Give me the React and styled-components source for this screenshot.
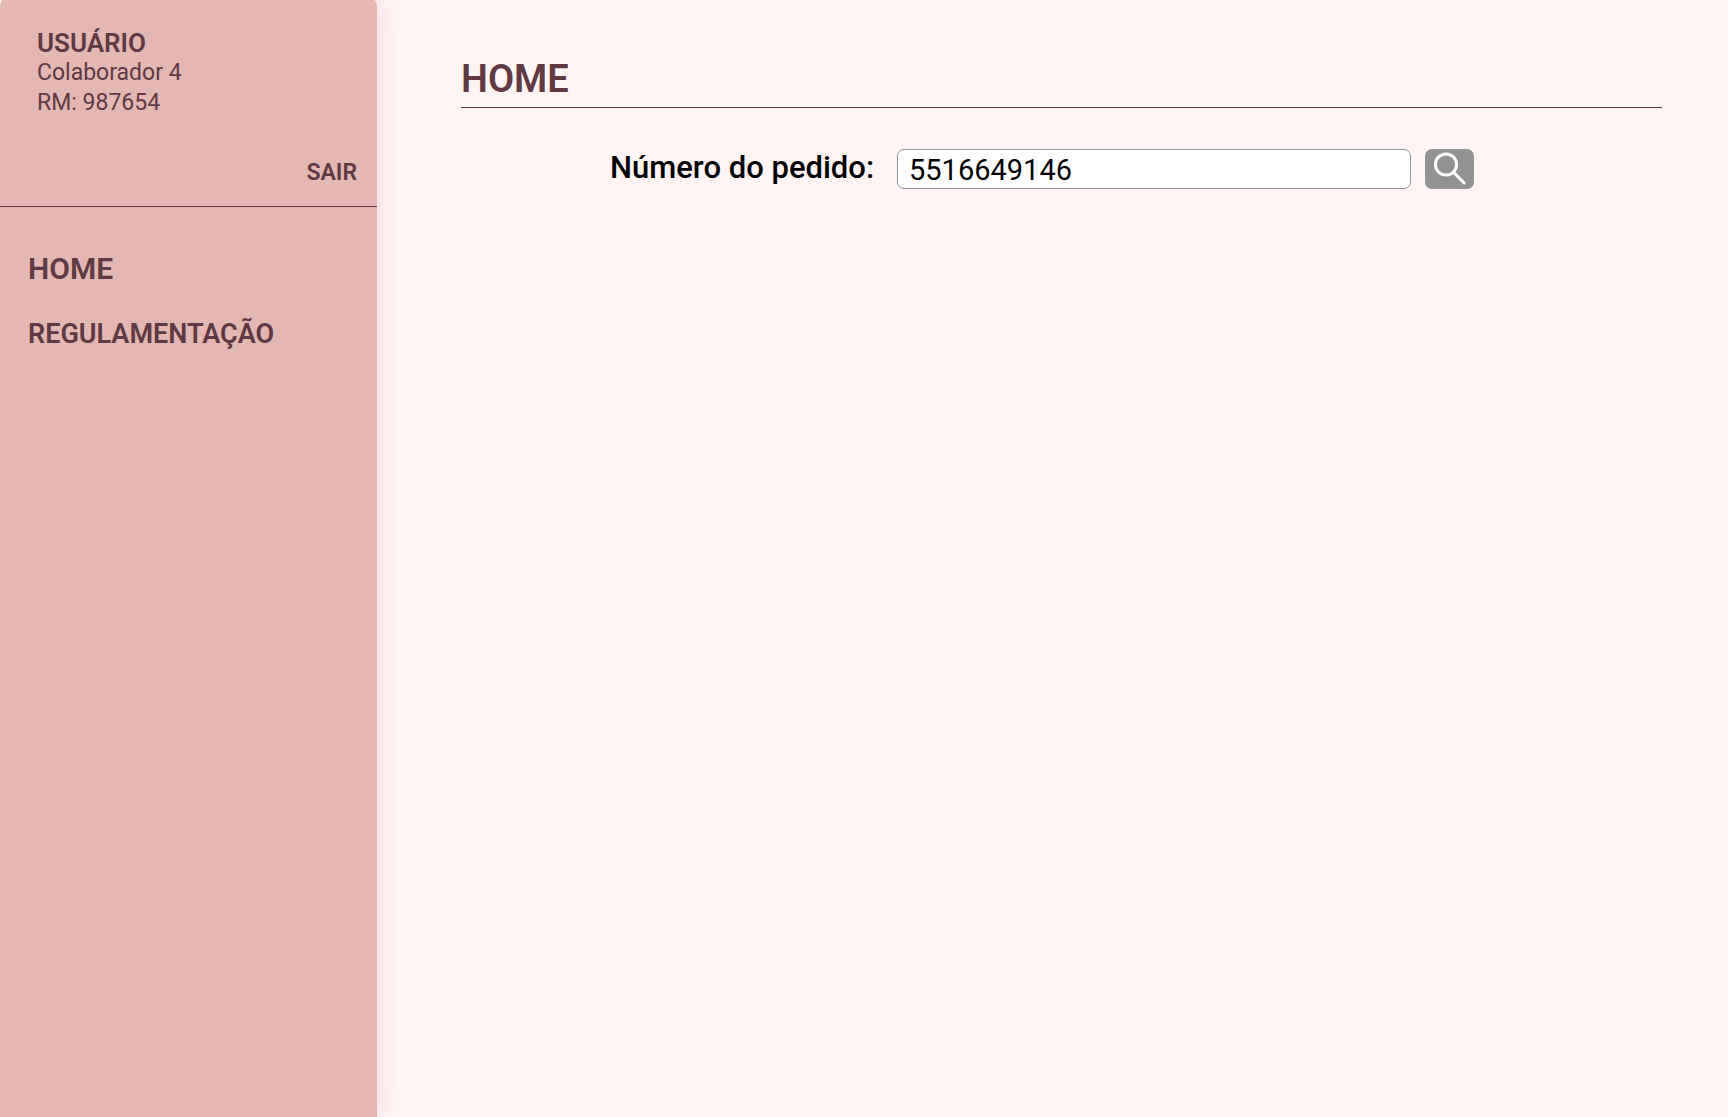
import React, { useState } from "react";
import styled, { createGlobalStyle } from "styled-components";

const wine = "#613943";
const blush = "#fff5f4";

const GlobalStyle = createGlobalStyle`
  *, *::before, *::after { box-sizing: border-box; }
  body {
    margin: 0;
    background: ${blush};
    color: ${wine};
    font-family: Roboto, "Noto Sans", "Liberation Sans", sans-serif;
  }
  h1, p { margin: 0; }
`;

const Page = styled.div`
  display: flex;
  min-height: 100vh;
`;

const Sidebar = styled.aside`
  flex: 0 0 377px;
  background: #e4b7b2;
  border-radius: 3px 3px 0 0 / 8px 8px 0 0;
  box-shadow: 4px 0 24px rgba(228, 160, 175, 0.26);
`;

const UserPanel = styled.section`
  display: flex;
  flex-direction: column;
  height: 207px;
  padding: 28px 20px 16px 37px;
  border-bottom: 1px solid ${wine};
`;

const UserName = styled.p`
  font-size: 26px;
  font-weight: 600;
  line-height: 30px;
`;

const UserDetail = styled.p`
  font-size: 23px;
  line-height: 30px;
`;

const LogoutButton = styled.button`
  align-self: flex-end;
  margin-top: auto;
  padding: 0;
  border: 0;
  background: none;
  color: inherit;
  font: 600 23px/34px Roboto, sans-serif;
  cursor: pointer;
`;

const Nav = styled.nav`
  display: flex;
  flex-direction: column;
  align-items: flex-start;
  gap: 29px;
  padding: 44px 28px;
`;

const NavLink = styled.a`
  color: inherit;
  font-size: ${({ $size }) => $size}px;
  font-weight: 600;
  line-height: 36px;
  text-decoration: none;
`;

const Main = styled.main`
  flex: 1;
  min-width: 0;
  padding: 57px 66px 40px 84px;
`;

const Title = styled.h1`
  padding: 0 0 6px;
  border-bottom: 1px solid ${wine};
  font-size: 38px;
  font-weight: 600;
  line-height: 44px;
`;

const SearchForm = styled.form`
  display: flex;
  align-items: center;
  gap: 14px;
  padding: 41px 188px 0 149px;
`;

const Label = styled.label`
  flex: 0 0 273px;
  padding-bottom: 3px;
  color: #000;
  font-size: 31px;
  font-weight: 500;
  line-height: 36px;
  white-space: nowrap;
`;

const OrderInput = styled.input`
  flex: 1;
  min-width: 0;
  height: 40px;
  padding: 2px 11px 0;
  border: 1px solid #929292;
  border-radius: 7px;
  background: #fff;
  color: #000;
  font: 400 29px/36px Roboto, sans-serif;
`;

const SearchButton = styled.button`
  flex: 0 0 49px;
  display: flex;
  height: 40px;
  padding: 0;
  border: 0;
  border-radius: 7px;
  background: #929292;
  cursor: pointer;
`;

function SearchIcon() {
  return (
    <svg width="49" height="40" viewBox="0 0 49 40" fill="none" stroke="#fff" strokeWidth="3" strokeLinecap="round" aria-hidden="true">
      <circle cx="21" cy="15.5" r="10.6" />
      <path d="M28.6 23.4 39.2 34" />
    </svg>
  );
}

export default function App() {
  const [order, setOrder] = useState("5516649146");

  return (
    <>
      <GlobalStyle />
      <Page>
        <Sidebar>
          <UserPanel>
            <UserName>USUÁRIO</UserName>
            <UserDetail>Colaborador 4</UserDetail>
            <UserDetail>RM: 987654</UserDetail>
            <LogoutButton type="button">SAIR</LogoutButton>
          </UserPanel>
          <Nav>
            <NavLink href="#home" $size={30}>HOME</NavLink>
            <NavLink href="#regulamentacao" $size={27}>REGULAMENTAÇÃO</NavLink>
          </Nav>
        </Sidebar>
        <Main>
          <Title>HOME</Title>
          <SearchForm onSubmit={(event) => event.preventDefault()}>
            <Label htmlFor="pedido">Número do pedido:</Label>
            <OrderInput
              id="pedido"
              type="text"
              value={order}
              onChange={(event) => setOrder(event.target.value)}
            />
            <SearchButton type="submit" aria-label="Buscar">
              <SearchIcon />
            </SearchButton>
          </SearchForm>
        </Main>
      </Page>
    </>
  );
}
